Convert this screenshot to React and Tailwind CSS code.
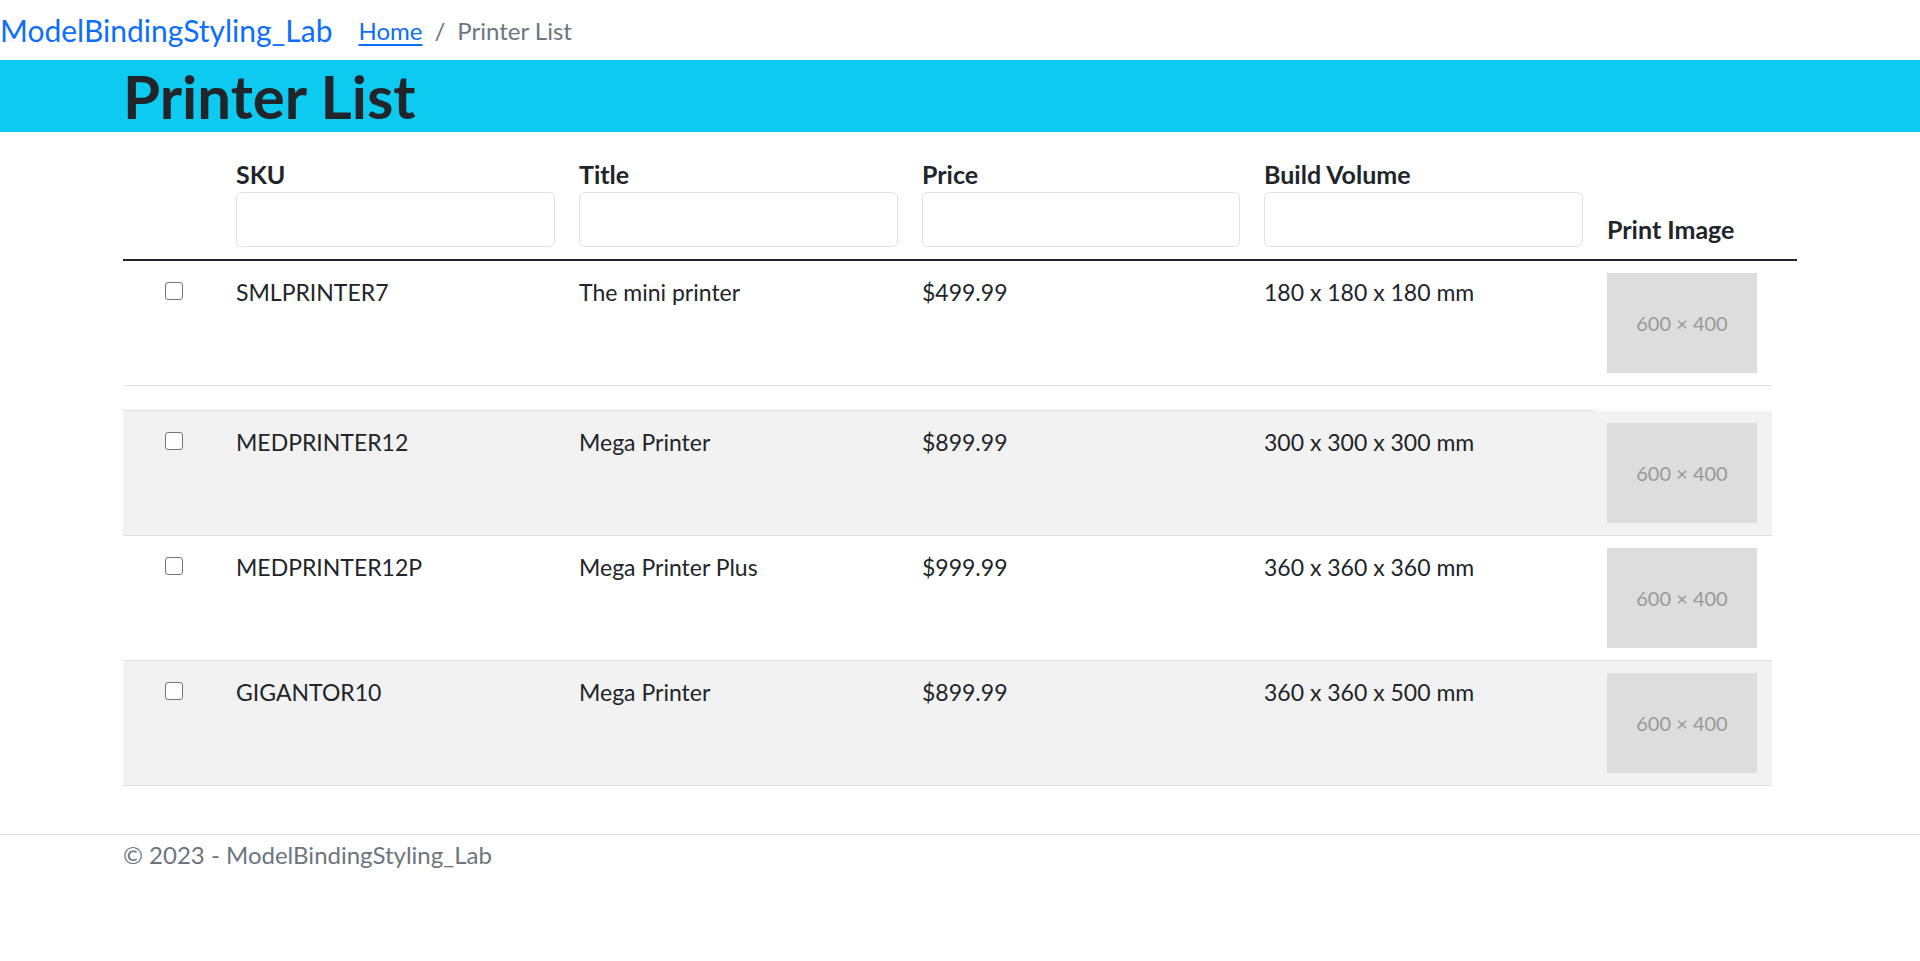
import React from 'react';

const printers = [
  { sku: 'SMLPRINTER7', title: 'The mini printer', price: '$499.99', volume: '180 x 180 x 180 mm' },
  { sku: 'MEDPRINTER12', title: 'Mega Printer', price: '$899.99', volume: '300 x 300 x 300 mm' },
  { sku: 'MEDPRINTER12P', title: 'Mega Printer Plus', price: '$999.99', volume: '360 x 360 x 360 mm' },
  { sku: 'GIGANTOR10', title: 'Mega Printer', price: '$899.99', volume: '360 x 360 x 500 mm' },
];

const font = { fontFamily: 'Lato, "Liberation Sans", sans-serif' };

// placeholder for the 600x400 print image
function Placeholder() {
  return (
    <div className="w-[150px] h-[100px] bg-[#dddddd] flex items-center justify-center text-[20px] text-[#999999]">
      600 × 400
    </div>
  );
}

function Checkbox() {
  return (
    <div className="h-[36px] flex items-center justify-center">
      <span className="block w-[18px] h-[18px] border-[1.5px] border-[#767676] rounded-[3px] bg-white"></span>
    </div>
  );
}

function HeaderCell({ label }) {
  return (
    <div className="p-[12px] flex flex-col">
      <span className="font-bold text-[25px] leading-[36px]">{label}</span>
      <input type="text" className="h-[55px] w-full border border-[#dee2e6] rounded-[6px] bg-white outline-none" />
    </div>
  );
}

function Row({ p, striped }) {
  return (
    <div
      className={`w-[1649px] grid grid-cols-[101px_343px_343px_342px_343px_177px] border-b border-[#dee2e6] text-[23px] ${striped ? 'bg-[#f2f2f2]' : 'bg-white'}`}
    >
      <div className="p-[12px]"><Checkbox /></div>
      <div className="px-[12px] pt-[13px] leading-[36px]">{p.sku}</div>
      <div className="px-[12px] pt-[13px] leading-[36px]">{p.title}</div>
      <div className="px-[12px] pt-[13px] leading-[36px]">{p.price}</div>
      <div className="px-[12px] pt-[13px] leading-[36px]">{p.volume}</div>
      <div className="p-[12px]"><Placeholder /></div>
    </div>
  );
}

export default function App() {
  return (
    <div className="min-h-screen bg-white text-[#212529] text-[24px]" style={font}>
      {/* Navbar */}
      <nav className="h-[60px] flex items-center">
        <a className="text-[30px] leading-[45px] text-[#0d6efd]">ModelBindingStyling_Lab</a>
        <div className="ml-[26px] flex items-center leading-[36px] mt-[1px]">
          <a className="text-[#0d6efd] underline underline-offset-[4px]">Home</a>
          <span className="text-[#6c757d] px-[12px]">/</span>
          <span className="text-[#6c757d]">Printer List</span>
        </div>
      </nav>

      {/* Title band */}
      <div className="bg-[#0dcaf0] h-[72px]">
        <div className="w-[1710px] mx-auto px-[18px]">
          <h1 className="text-[60px] leading-[72px] font-bold">Printer List</h1>
        </div>
      </div>

      {/* Table */}
      <div className="w-[1710px] mx-auto px-[18px] mt-[12px]">
        <div className="grid grid-cols-[101px_343px_343px_342px_343px_202px] items-end border-b-2 border-[#212529]">
          <div></div>
          <HeaderCell label="SKU" />
          <HeaderCell label="Title" />
          <HeaderCell label="Price" />
          <HeaderCell label="Build Volume" />
          <div className="p-[12px] font-bold text-[25px] leading-[36px]">Print Image</div>
        </div>

        <Row p={printers[0]} />
        <div className="h-[24px]"></div>
        <div className="w-[1471px] h-px bg-[#dee2e6]"></div>
        <Row p={printers[1]} striped />
        <Row p={printers[2]} />
        <Row p={printers[3]} striped />
      </div>

      {/* Footer */}
      <footer className="mt-[48px] border-t border-[#dee2e6]">
        <div className="w-[1710px] mx-auto px-[18px] pt-[2px] leading-[36px] text-[#6c757d]">
          © 2023 - ModelBindingStyling_Lab
        </div>
      </footer>
    </div>
  );
}
